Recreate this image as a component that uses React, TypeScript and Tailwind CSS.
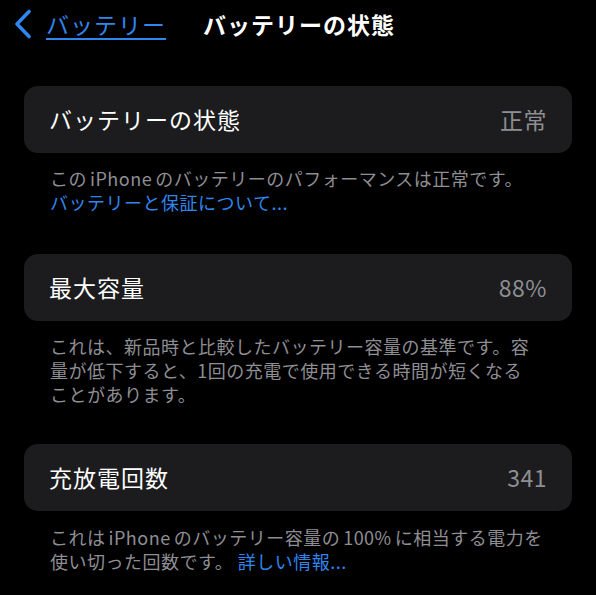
import React from 'react';

const font = { fontFamily: '"Noto Sans CJK JP", "Noto Sans", sans-serif' };

function Row({ label, value }: { label: string; value: string }) {
  return (
    <div className="flex h-[67px] items-center justify-between rounded-[14px] bg-[#1c1c1e] px-[25px]">
      <span className="text-[23px] tracking-[1px] text-white">{label}</span>
      <span className="text-[23px] tracking-[0.5px] text-[#8e8e93]">{value}</span>
    </div>
  );
}

export default function App() {
  return (
    <div className="min-h-[595px] bg-black" style={font}>
      {/* Nav bar */}
      <div className="flex h-[46px] items-center pl-[14px] pt-[2px]">
        <svg width="18" height="30" viewBox="0 0 18 30" fill="none">
          <path d="M15 2.5 L3 15 L15 27.5" stroke="#2f86ee" strokeWidth="3.6" strokeLinecap="round" strokeLinejoin="round" />
        </svg>
        <span className="ml-[14px] text-[23px] tracking-[1px] text-[#2f86ee] underline decoration-[1.5px] underline-offset-[4px]">
          バッテリー
        </span>
        <span className="ml-[37px] text-[23px] font-bold tracking-[1px] text-white">バッテリーの状態</span>
      </div>

      <div className="px-6 pt-[40px]">
        {/* Battery health */}
        <Row label="バッテリーの状態" value="正常" />
        <p className="mt-[13px] px-[26px] text-[18px] leading-[24px] tracking-[0.5px] text-[#8e8e93]">
          この<span className="mx-[3px]">iPhone</span>のバッテリーのパフォーマンスは正常です。
          <br />
          <span className="text-[#2f86ee]">バッテリーと保証について...</span>
        </p>

        {/* Maximum capacity */}
        <div className="mt-[40px]">
          <Row label="最大容量" value="88%" />
          <p className="mt-[13px] px-[26px] text-[18px] leading-[24px] tracking-[0.5px] text-[#8e8e93]">
            これは、新品時と比較したバッテリー容量の基準です。容
            <br />
            量が低下すると、1回の充電で使用できる時間が短くなる
            <br />
            ことがあります。
          </p>
        </div>

        {/* Cycle count */}
        <div className="mt-[38px]">
          <Row label="充放電回数" value="341" />
          <p className="mt-[14px] px-[26px] text-[18px] leading-[24px] tracking-[0.5px] text-[#8e8e93]">
            これは<span className="mx-[3px]">iPhone</span>のバッテリー容量の<span className="mx-[3px]">100%</span>に相当する電力を
            <br />
            使い切った回数です。 <span className="text-[#2f86ee]">詳しい情報...</span>
          </p>
        </div>
      </div>
    </div>
  );
}
